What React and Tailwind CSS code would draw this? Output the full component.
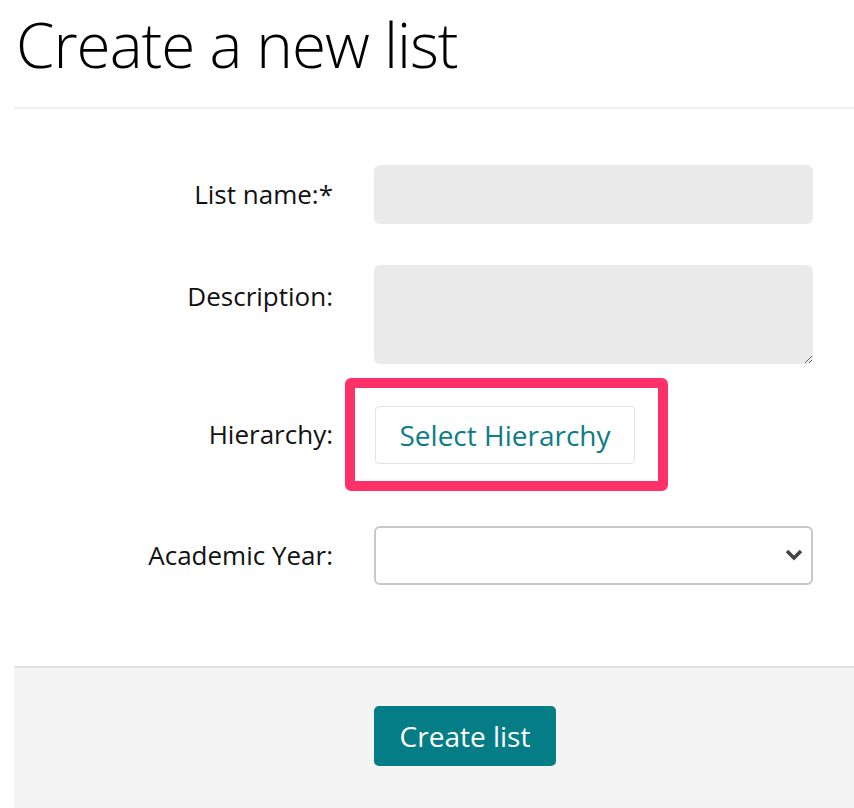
export default function App() {
  return (
    <div className="min-h-[808px] bg-white pl-[14px] font-['Open_Sans',sans-serif] text-[#111]">
      <h1 className="pl-[2px] pt-[4px] text-[62px] font-light leading-[80px] tracking-[-1px] text-black">
        Create a new list
      </h1>
      <div className="mt-[23px] h-[2px] bg-[#eeeeee]" />

      <form className="pt-[56px]">
        <div className="flex items-center">
          <label className="w-[319px] text-right text-[26px]">List name:*</label>
          <input
            type="text"
            className="ml-[41px] h-[59px] w-[439px] rounded-[6px] bg-[#eaeaea] px-3 text-[24px] outline-none"
          />
        </div>

        <div className="mt-[41px] flex items-start">
          <label className="w-[319px] pt-[12px] text-right text-[26px]">Description:</label>
          <textarea className="ml-[41px] h-[99px] w-[439px] rounded-[6px] bg-[#eaeaea] px-3 py-2 text-[24px] outline-none" />
        </div>

        <div className="mt-[14px] flex items-center">
          <label className="w-[319px] text-right text-[26px]">Hierarchy:</label>
          <div className="ml-[12px] rounded-[6px] border-[10px] border-[#fe3169] pb-[17px] pl-[20px] pr-[23px] pt-[18px]">
            <button
              type="button"
              className="h-[58px] w-[260px] rounded-[4px] border border-[#e3e3e3] bg-white text-[28px] text-[#0b7d85]"
            >
              Select Hierarchy
            </button>
          </div>
        </div>

        <div className="mt-[35px] flex items-center">
          <label className="w-[319px] text-right text-[26px]">Academic Year:</label>
          <div className="relative ml-[41px] h-[59px] w-[439px] rounded-[6px] border-2 border-[#c8c8c8] bg-white">
            <svg
              className="absolute right-[8px] top-[20px]"
              width="18"
              height="14"
              viewBox="0 0 18 14"
              fill="none"
            >
              <path d="M2 3l7 7 7-7" stroke="#444" strokeWidth="3.5" />
            </svg>
          </div>
        </div>
      </form>

      <div className="mt-[81px] border-t-2 border-[#e2e2e2] bg-[#f4f4f4] pb-[60px] pt-[38px]">
        <div className="pl-[360px]">
          <button
            type="button"
            className="h-[60px] w-[182px] rounded-[5px] bg-[#047d86] text-[28px] text-white"
          >
            Create list
          </button>
        </div>
      </div>
    </div>
  );
}
